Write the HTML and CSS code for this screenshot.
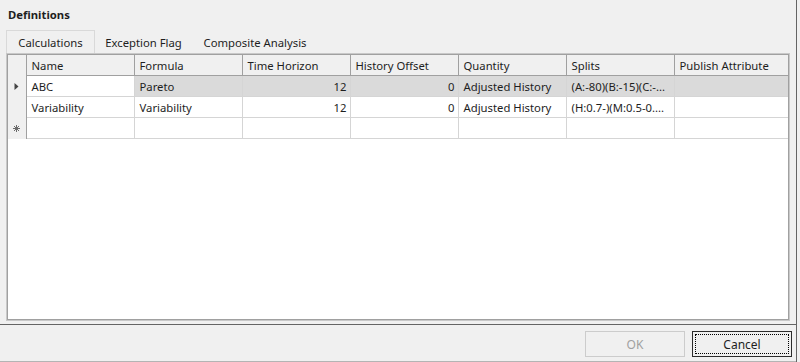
FILE: index.html
```html
<!DOCTYPE html>
<html lang="en">
<head>
    <meta charset="UTF-8">
    <title>Definitions</title>
    <link rel="stylesheet" href="styles.css">
</head>
<body>
    <div class="window">
        <div class="main">
            <div class="title">Definitions</div>
            <div class="tabs">
                <div class="tab tab1 active">Calculations</div>
                <div class="tab tab2">Exception Flag</div>
                <div class="tab tab3">Composite Analysis</div>
            </div>
            <div class="tabpage">
                <div class="grid">
                    <table id="calcTable">
                        <colgroup>
                            <col class="c-rh">
                            <col class="c-std"><col class="c-std"><col class="c-std">
                            <col class="c-std"><col class="c-std"><col class="c-std">
                            <col>
                        </colgroup>
                        <thead>
                            <tr>
                                <th class="rh"></th>
                                <th>Name</th>
                                <th>Formula</th>
                                <th>Time Horizon</th>
                                <th>History Offset</th>
                                <th>Quantity</th>
                                <th>Splits</th>
                                <th>Publish Attribute</th>
                            </tr>
                        </thead>
                        <tbody>
                            <tr class="selected">
                                <td class="rh">
                                    <svg width="5" height="7" viewBox="0 0 5 7"><path d="M0.5 0 L4.5 3.5 L0.5 7 Z" fill="#444"/></svg>
                                </td>
                                <td class="current">ABC</td>
                                <td>Pareto</td>
                                <td class="num">12</td>
                                <td class="num">0</td>
                                <td>Adjusted History</td>
                                <td>(A:-80)(B:-15)(C:-...</td>
                                <td></td>
                            </tr>
                            <tr>
                                <td class="rh"></td>
                                <td>Variability</td>
                                <td>Variability</td>
                                <td class="num">12</td>
                                <td class="num">0</td>
                                <td>Adjusted History</td>
                                <td>(H:0.7-)(M:0.5-0....</td>
                                <td></td>
                            </tr>
                            <tr>
                                <td class="rh">
                                    <svg width="7" height="7" viewBox="0 0 7 7">
                                        <path d="M3.5 0 V7 M0 3.5 H7 M1 1 L6 6 M6 1 L1 6" stroke="#6a6a6a" stroke-width="1" fill="none"/>
                                    </svg>
                                </td>
                                <td></td><td></td><td></td><td></td><td></td><td></td><td></td>
                            </tr>
                        </tbody>
                    </table>
                </div>
            </div>
        </div>
        <div class="footer">
            <button class="btn" disabled>OK</button>
            <button class="btn focused">Cancel</button>
        </div>
    </div>
</body>
</html>
```

FILE: styles.css
```css
body{margin:0; background:#f0f0f0; font-family:"Noto Sans","Liberation Sans",sans-serif; font-size:11.3px; color:#1e1e1e; overflow:hidden;}
.window{width:797px; height:362px; border-right:1px solid #646464; box-sizing:border-box; display:flex; flex-direction:column;}
.main{height:325px; border-bottom:1px solid #646464; box-sizing:border-box;}
.title{font-weight:bold; padding:7px 0 0 8px; line-height:16px;}

/* tabs */
.tabs{display:flex; margin:7px 0 0 6px; height:23px;}
.tab{box-sizing:border-box; text-align:center; line-height:23px; border:1px solid transparent; border-bottom:none;}
.tab.active{border-color:#d9d9d9;}
.tab1{width:89px;}
.tab2{width:97px;}
.tab3{width:126px;}

.tabpage{margin-left:6px; width:784px; height:268px; box-sizing:border-box; border:1px solid #c8c8c8;}
.grid{height:100%; box-sizing:border-box; border:1px solid #a0a0a0; background:#fff;}

/* grid table */
#calcTable{width:100%; border-collapse:collapse; table-layout:fixed;}
#calcTable .c-rh{width:18px;}
#calcTable .c-std{width:108px;}
#calcTable th{background:#f0f0f0; font-weight:normal; text-align:left; height:20px; padding:0 5px; border-right:1px solid #a0a0a0; border-bottom:1px solid #a0a0a0; white-space:nowrap; overflow:hidden;}
#calcTable td{height:20px; padding:0 5px; border-right:1px solid #d5d5d5; border-bottom:1px solid #d5d5d5; white-space:nowrap; overflow:hidden;}
#calcTable td.num{text-align:right; padding-right:3px;}
#calcTable .rh{background:#f0f0f0; padding:0; text-align:center; border-right:1px solid #a0a0a0; border-bottom:none;}
#calcTable td.rh svg{display:block; margin:0 auto;}
#calcTable tr.selected td{background:#dadada;}
#calcTable tr.selected td.rh{background:#f0f0f0;}
#calcTable tr.selected td.current{background:#fff;}
#calcTable tr>:last-child{border-right:none;}

/* buttons */
.footer{flex:1; display:flex; justify-content:flex-end; align-items:flex-start; gap:7px; padding:6px 4px 0 0; border-bottom:1px solid #b4b4b4;}
.btn{width:100px; height:26px; font-family:inherit; font-size:12px; background:#f0f0f0; border:1px solid #cccccc; color:#a0a0a0; padding:0;}
.btn.focused{border-color:#2b2b2b; color:#1e1e1e; outline:1px dotted #000; outline-offset:-4px;}
```
